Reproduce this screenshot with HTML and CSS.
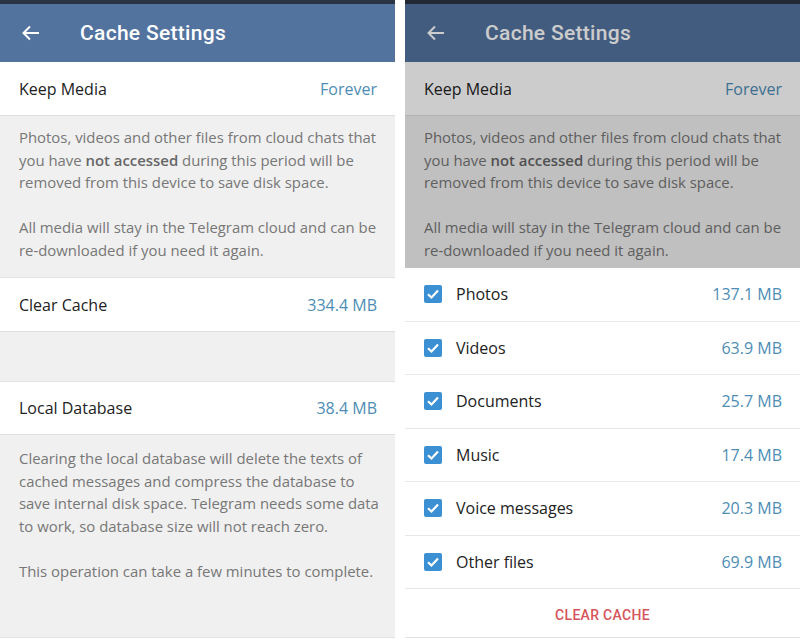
FILE: index.html
```html
<!DOCTYPE html>
<html lang="en">
<head>
    <meta charset="UTF-8">
    <meta name="viewport" content="width=device-width, initial-scale=1.0">
    <title>Cache Settings</title>
    <link rel="stylesheet" href="styles.css">
</head>
<body>

    <!-- Left screen: settings list -->
    <div class="screen">
        <div class="statusbar"></div>
        <div class="header">
            <svg class="back" width="20" height="20" viewBox="0 0 20 20">
                <path d="M18 10H3M9 3.5L2.5 10L9 16.5" fill="none" stroke="currentColor" stroke-width="2"/>
            </svg>
            <span class="title">Cache Settings</span>
        </div>
        <div class="row">
            <span class="label">Keep Media</span>
            <span class="value">Forever</span>
        </div>
        <div class="info info-media">
            <p>Photos, videos and other files from cloud chats that you have <b>not accessed</b> during this period will be removed from this device to save disk space.</p>
            <p>All media will stay in the Telegram cloud and can be re&#8209;downloaded if you need it again.</p>
        </div>
        <div class="row row-cache">
            <span class="label">Clear Cache</span>
            <span class="value">334.4 MB</span>
        </div>
        <div class="spacer"></div>
        <div class="row row-db">
            <span class="label">Local Database</span>
            <span class="value">38.4 MB</span>
        </div>
        <div class="info info-db">
            <p>Clearing the local database will delete the texts of cached messages and compress the database to save internal disk space. Telegram needs some data to work, so database size will not reach zero.</p>
            <p>This operation can take a few minutes to complete.</p>
        </div>
    </div>

    <!-- Right screen: clear cache sheet -->
    <div class="screen screen-sheet">
        <div class="statusbar"></div>
        <div class="header">
            <svg class="back" width="20" height="20" viewBox="0 0 20 20">
                <path d="M18 10H3M9 3.5L2.5 10L9 16.5" fill="none" stroke="currentColor" stroke-width="2"/>
            </svg>
            <span class="title">Cache Settings</span>
        </div>
        <div class="row">
            <span class="label">Keep Media</span>
            <span class="value">Forever</span>
        </div>
        <div class="info info-media">
            <p>Photos, videos and other files from cloud chats that you have <b>not accessed</b> during this period will be removed from this device to save disk space.</p>
            <p>All media will stay in the Telegram cloud and can be re&#8209;downloaded if you need it again.</p>
        </div>

        <div class="dim"></div>

        <div class="sheet">
            <div class="check-row">
                <span class="checkbox"><svg width="18" height="18" viewBox="0 0 18 18"><path d="M4 9.2L7.5 12.5L14 5.5" fill="none" stroke="#fff" stroke-width="2.2"/></svg></span>
                <span class="label">Photos</span>
                <span class="value">137.1 MB</span>
            </div>
            <div class="check-row">
                <span class="checkbox"><svg width="18" height="18" viewBox="0 0 18 18"><path d="M4 9.2L7.5 12.5L14 5.5" fill="none" stroke="#fff" stroke-width="2.2"/></svg></span>
                <span class="label">Videos</span>
                <span class="value">63.9 MB</span>
            </div>
            <div class="check-row">
                <span class="checkbox"><svg width="18" height="18" viewBox="0 0 18 18"><path d="M4 9.2L7.5 12.5L14 5.5" fill="none" stroke="#fff" stroke-width="2.2"/></svg></span>
                <span class="label">Documents</span>
                <span class="value">25.7 MB</span>
            </div>
            <div class="check-row">
                <span class="checkbox"><svg width="18" height="18" viewBox="0 0 18 18"><path d="M4 9.2L7.5 12.5L14 5.5" fill="none" stroke="#fff" stroke-width="2.2"/></svg></span>
                <span class="label">Music</span>
                <span class="value">17.4 MB</span>
            </div>
            <div class="check-row">
                <span class="checkbox"><svg width="18" height="18" viewBox="0 0 18 18"><path d="M4 9.2L7.5 12.5L14 5.5" fill="none" stroke="#fff" stroke-width="2.2"/></svg></span>
                <span class="label">Voice messages</span>
                <span class="value">20.3 MB</span>
            </div>
            <div class="check-row">
                <span class="checkbox"><svg width="18" height="18" viewBox="0 0 18 18"><path d="M4 9.2L7.5 12.5L14 5.5" fill="none" stroke="#fff" stroke-width="2.2"/></svg></span>
                <span class="label">Other files</span>
                <span class="value">69.9 MB</span>
            </div>
            <div class="sheet-button">CLEAR CACHE</div>
        </div>
    </div>

</body>
</html>
```

FILE: styles.css
```css
body {
    margin: 0;
    display: flex;
    gap: 10px;
    height: 640px;
    background-color: #fff;
    font-family: 'Open Sans', 'Noto Sans', sans-serif;
    overflow: hidden;
}
.screen {
    position: relative;
    width: 395px;
    height: 637px;
    display: flex;
    flex-direction: column;
    background-color: #f0f0f0;
    border-bottom: 1px solid #e2e2e2;
    overflow: hidden;
}
.statusbar {
    height: 4px;
    background-color: #2b3442;
}
.header {
    height: 58px;
    display: flex;
    align-items: center;
    background-color: #53739f;
    color: #fff;
}
.back {
    margin-left: 21px;
    margin-right: 39px;
}
.title {
    font-family: 'Roboto', sans-serif;
    font-weight: 500;
    font-size: 21px;
    letter-spacing: 0.3px;
}
.row {
    height: 53px;
    display: flex;
    align-items: center;
    justify-content: space-between;
    padding: 0 18px 0 19px;
    background-color: #fff;
    border-bottom: 1px solid #dedede;
}
.label {
    font-size: 16px;
    color: #222;
}
.value {
    font-size: 16px;
    color: #4d8db5;
}
.info {
    padding: 10px 16px 16px 19px;
    font-size: 14.9px;
    line-height: 22.5px;
    color: #777;
}
.info p {
    margin: 0 0 22.5px 0;
}
.info p:last-child {
    margin-bottom: 0;
}
.info b {
    font-weight: 600;
    color: #666;
}
.row-cache {
    border-top: 1px solid #e2e2e2;
}
.spacer {
    height: 49px;
}
.row-db {
    height: 52px;
    border-top: 1px solid #e2e2e2;
}
.info-db {
    padding-top: 12px;
}

/* dim layer over the screen behind the sheet */
.dim {
    position: absolute;
    top: 0;
    left: 0;
    right: 0;
    bottom: 0;
    background-color: rgba(0, 0, 0, 0.2);
}
.sheet {
    position: absolute;
    left: 0;
    right: 0;
    top: 268px;
    bottom: 0;
    background-color: #fff;
    display: flex;
    flex-direction: column;
}
.check-row {
    height: 52.5px;
    display: flex;
    align-items: center;
    padding: 0 18px 0 19px;
    border-bottom: 1px solid #e8e8e8;
}
.check-row .label {
    flex: 1;
}
.checkbox {
    width: 18px;
    height: 18px;
    margin-right: 14px;
    border-radius: 2px;
    background-color: #3b8fd3;
    display: flex;
}
.sheet-button {
    flex: 1;
    display: flex;
    align-items: center;
    justify-content: center;
    padding-top: 3px;
    font-family: 'Roboto', sans-serif;
    font-weight: 500;
    font-size: 14px;
    color: #d6545c;
    letter-spacing: 0.3px;
}
```
